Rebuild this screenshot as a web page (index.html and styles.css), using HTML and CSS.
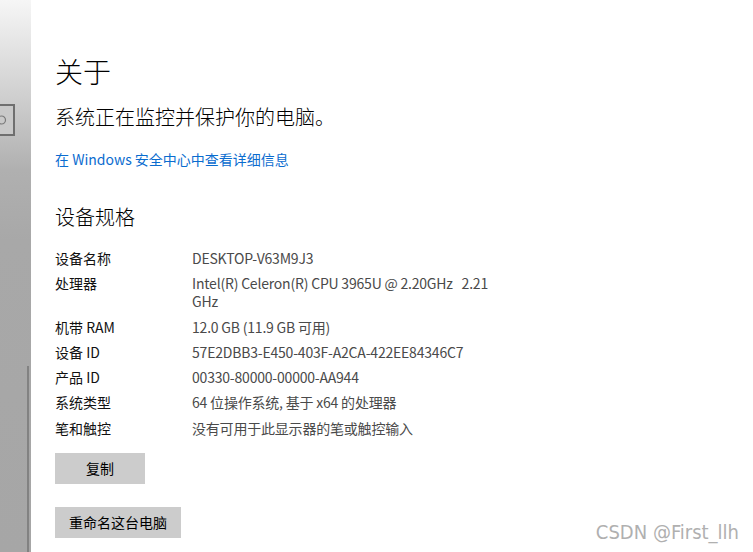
FILE: index.html
```html
<!DOCTYPE html>
<html lang="zh-CN">
<head>
<meta charset="utf-8">
<title>关于</title>
<link rel="stylesheet" href="styles.css">
</head>
<body>
<div class="app">
  <aside class="sidebar">
    <div class="search">
      <svg class="search-icon" width="13" height="32" viewBox="0 0 13 32"><circle cx="1.5" cy="16" r="4" fill="none" stroke="#7a7a7a" stroke-width="1.2"/></svg>
    </div>
    <div class="scrollbar"></div>
  </aside>
  <main class="content">
    <h1 class="title">关于</h1>
    <p class="status">系统正在监控并保护你的电脑。</p>
    <a class="link" href="#">在 Windows 安全中心中查看详细信息</a>
    <h2 class="section">设备规格</h2>
    <dl class="specs">
      <dt>设备名称</dt><dd>DESKTOP-V63M9J3</dd>
      <dt>处理器</dt><dd class="pre">Intel(R) Celeron(R) CPU 3965U @ 2.20GHz   2.21 GHz</dd>
      <dt>机带 RAM</dt><dd>12.0 GB (11.9 GB 可用)</dd>
      <dt>设备 ID</dt><dd>57E2DBB3-E450-403F-A2CA-422EE84346C7</dd>
      <dt>产品 ID</dt><dd>00330-80000-00000-AA944</dd>
      <dt>系统类型</dt><dd>64 位操作系统, 基于 x64 的处理器</dd>
      <dt>笔和触控</dt><dd>没有可用于此显示器的笔或触控输入</dd>
    </dl>
    <button class="btn btn-copy">复制</button>
    <button class="btn btn-rename">重命名这台电脑</button>
  </main>
</div>
<div class="watermark">CSDN @First_llh</div>
</body>
</html>
```

FILE: styles.css
```css
html, body {
  margin: 0;
  padding: 0;
  height: 100%;
  background: #ffffff;
  overflow: hidden;
}
body {
  font-family: "Noto Sans CJK SC", "Noto Sans", sans-serif;
  color: #000;
}
.app {
  display: flex;
  height: 552px;
}
.sidebar {
  width: 31px;
  flex: none;
  display: flex;
  flex-direction: column;
  background: linear-gradient(to bottom, #f6f6f6 0, #d2d2d2 90px, #b0b0b0 170px, #a8a8a8 240px, #a6a6a6 100%);
}
.search {
  margin-top: 104px;
  width: 13px;
  height: 28px;
  border: 2px solid #6f6f6f;
  border-left: none;
  background: #c9c9c9;
}
.search-icon {
  display: block;
  margin-top: -2px;
}
.scrollbar {
  margin-top: auto;
  margin-left: 27px;
  width: 2px;
  height: 186px;
  background: #828282;
}
.content {
  flex: 1;
  padding: 51px 0 0 24px;
  display: flex;
  flex-direction: column;
  align-items: flex-start;
}
.title {
  margin: 0;
  font-size: 28px;
  font-weight: 300;
  line-height: 40px;
}
.status {
  margin: 12px 0 0;
  font-size: 20px;
  font-weight: 300;
  line-height: 28px;
}
.link {
  margin-top: 18px;
  font-size: 14px;
  line-height: 20px;
  color: #0a6ccf;
  text-decoration: none;
}
.section {
  margin: 34px 0 0;
  font-size: 20px;
  font-weight: 300;
  line-height: 28px;
}
.specs {
  margin: 18px 0 0;
  display: grid;
  grid-template-columns: 137px 308px;
  row-gap: 7.3px;
  font-size: 14px;
  line-height: 18px;
}
.specs dt {
  color: #111;
}
.specs dd {
  margin: 0;
  color: #4a4a4a;
  letter-spacing: -0.2px;
}
.specs .pre {
  white-space: pre-wrap;
}
.btn {
  font-family: inherit;
  font-size: 14px;
  color: #000;
  background: #cccccc;
  border: none;
  height: 31px;
  min-width: 90px;
  padding: 0 14px;
  line-height: 31px;
}
.btn-copy {
  margin-top: 16px;
}
.btn-rename {
  margin-top: 23px;
}
.watermark {
  position: absolute;
  right: 14px;
  bottom: 8px;
  font-family: "Liberation Sans Narrow", "DejaVu Sans Condensed", "Liberation Sans", sans-serif;
  font-stretch: condensed;
  font-size: 20px;
  color: #b0b0b0;
  text-shadow: 0 0 1px #ffffff;
}
```
